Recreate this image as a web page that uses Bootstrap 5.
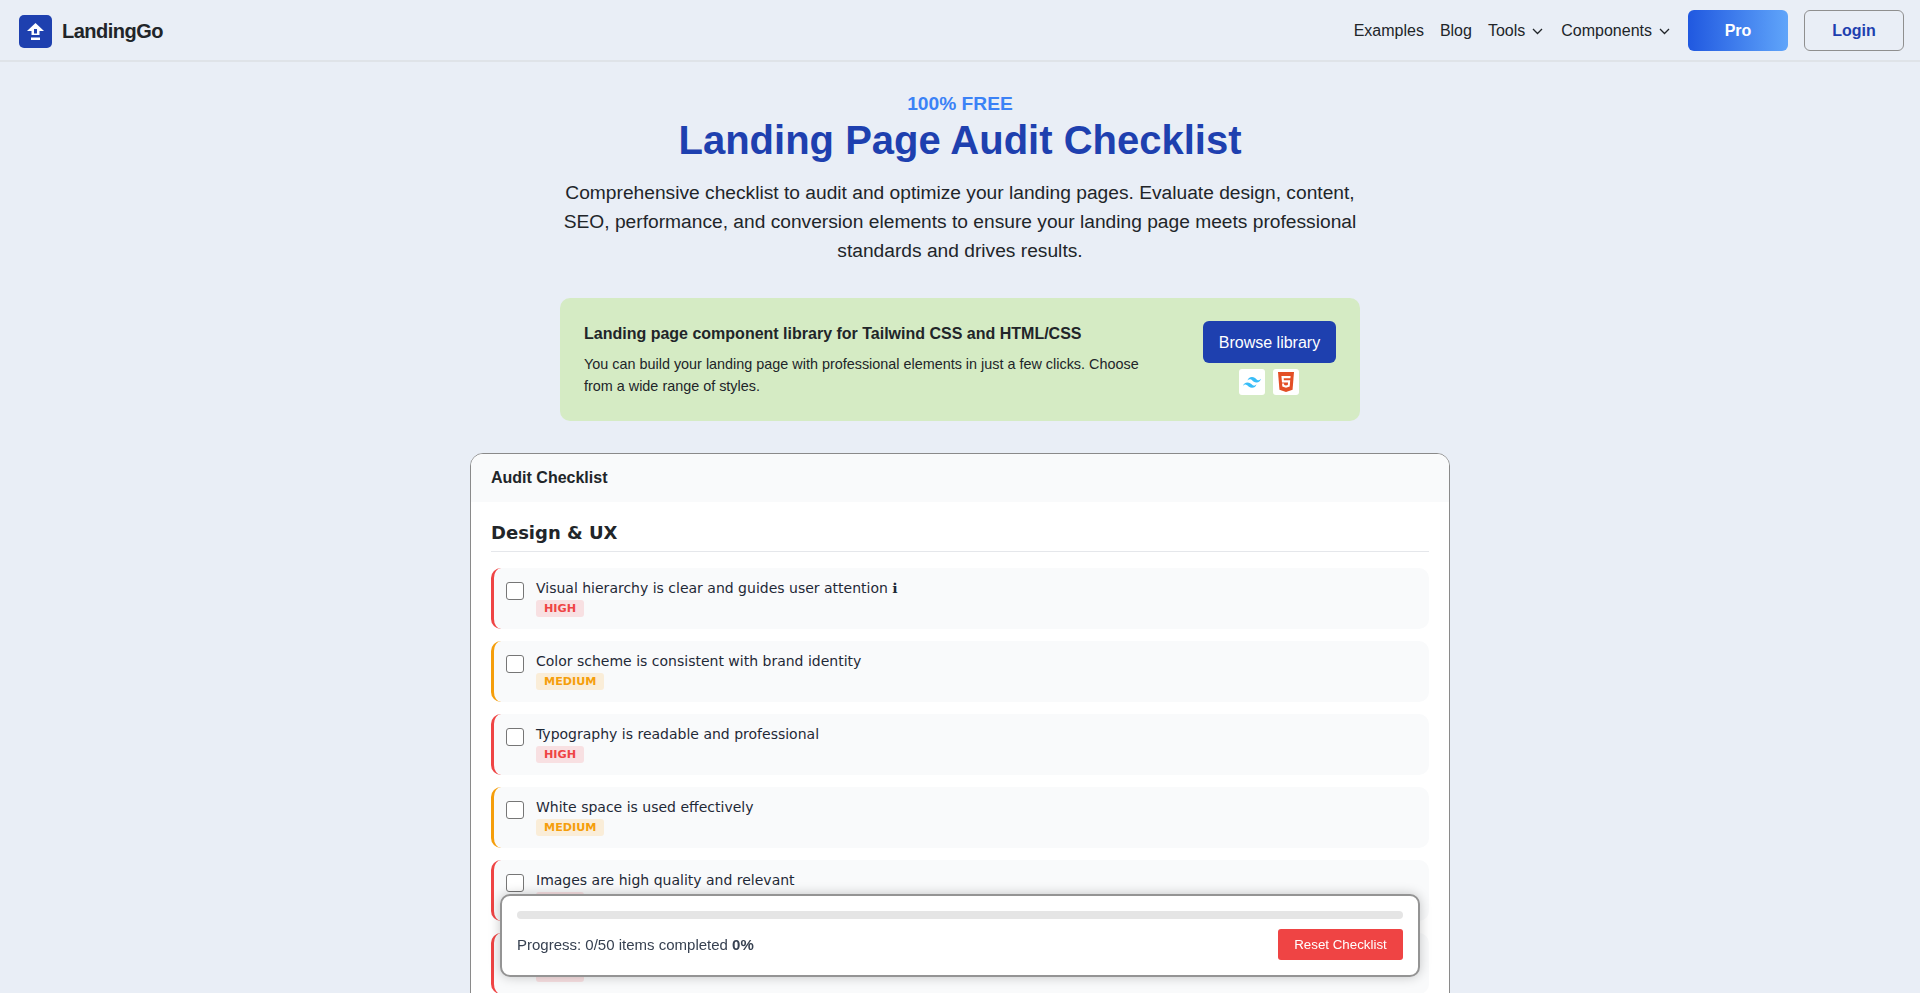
<!DOCTYPE html>
<html lang="en">
<head>
<meta charset="utf-8">
<title>Landing Page Audit Checklist</title>
<link href="https://cdn.jsdelivr.net/npm/bootstrap@5.3.0/dist/css/bootstrap.min.css" rel="stylesheet">
<style>
html,body{height:100%;overflow:hidden}
body{background:#e9eef6;font-family:"Liberation Sans",Arial,sans-serif;color:#212529}
.top-bar{height:62px;border-bottom:2px solid #dfe3e8;padding:2px 16px 0 19px}
.brand-box{width:33px;height:33px;background:#1e40af;border-radius:5px}
.brand-name{font-size:20px;font-weight:700;letter-spacing:-.5px;color:#212529;margin-left:10px}
.top-link{font-size:16px;color:#212529;text-decoration:none;white-space:nowrap;display:flex;align-items:center}
.top-links{gap:16px}
.chev{margin-left:6px;flex:none}
.pro-btn,.login-btn{width:100px;height:41px;font-size:16px;font-weight:700;border-radius:6px;padding:0;display:flex;align-items:center;justify-content:center;text-decoration:none;margin-top:-1px}
.pro-btn{background:linear-gradient(90deg,#2058e0,#60a5fa);color:#fff;border:0}
.login-btn{color:#1e40af;border:1px solid #8f8f8f;background:transparent}
.hero{padding-top:30px;width:800px}
.eyebrow{font-size:19.2px;font-weight:700;line-height:23px;color:#3b82f6}
.hero-title{font-size:40px;font-weight:700;line-height:48px;color:#1e40af;margin:1px 0 15px}
.hero-text{font-size:19.2px;line-height:28.8px;color:#212529;margin:0 0 33px}
.promo{width:800px;height:123px;background:#d5ebc4;border-radius:10px;padding:23px 24px 0}
.promo-title{font-size:16px;font-weight:700;line-height:20px;margin:0 0 10px;padding-top:3px}
.promo-text{font-size:14.4px;line-height:21.6px;margin:0;width:570px}
.browse-btn{width:133px;height:42px;background:#1e40af;color:#fff;border:0;border-radius:6px;font-size:16px;padding:2px 0 0}
.tech-tile{width:26px;height:26px;background:#fff;border-radius:3px}
.tile-row{margin-top:6px;margin-left:-1px}
.audit-box{width:980px;margin-top:32px;background:#fff;border:1px solid #8a8a8a;border-radius:13px;overflow:hidden}
.audit-head{height:48px;background:#f9fafb;padding:0 20px;font-size:16px;font-weight:700;display:flex;align-items:center}
.audit-body{padding:20px;font-family:"DejaVu Sans",sans-serif}
.group-title{font-size:18px;font-weight:700;line-height:21px;padding-bottom:8px;border-bottom:1px solid #e5e7eb;margin:0 0 16px}
.check-row{height:61px;margin-bottom:12px;background:#f9fafb;border-left:3px solid #ef4444;border-radius:10px;padding:12px;gap:12px}
.check-row.mid{border-left-color:#f59e0b}
.check-box{width:18px;height:18px;flex:none;border:1px solid #767676;border-radius:3px;background:#fff;margin-top:2px}
.check-text{font-size:14px;line-height:17px;color:#1f2937;margin-top:0}
.level{display:inline-block;font-size:11.2px;font-weight:700;line-height:17px;height:17px;padding:0 8px;border-radius:3px;margin-top:3px;vertical-align:top}
.level.hi{background:#f8e0e2;color:#ef4444}
.level.me{background:#faedd8;color:#f59e0b}
.progress-float{position:fixed;left:500px;top:894px;width:920px;height:83px;background:#fff;border:2px solid #949494;border-radius:10px;padding:15px 15px 0;box-shadow:0 0 12px rgba(0,0,0,.22)}
.track{height:8px;background:#e5e5e5;border-radius:4px;margin-bottom:10px}
.progress-label{font-size:15px;color:#374151;padding-top:1px}
.reset-btn{width:125px;height:31px;background:#ef4444;color:#fff;border:0;border-radius:3px;font-size:13.33px;padding:0}
</style>
</head>
<body>
<header class="top-bar d-flex align-items-center justify-content-between">
  <a href="#" class="d-flex align-items-center text-decoration-none">
    <span class="brand-box d-flex align-items-center justify-content-center">
      <svg width="17" height="17" viewBox="0 0 17 17" aria-hidden="true"><path d="M8.500 0 0 8h4.500v4h8V8H17z" fill="#fff"/><path d="M7 6h3v4.500H7z" fill="#1e40af"/><rect x="4" y="14.500" width="9" height="2.500" fill="#fff"/></svg>
    </span>
    <span class="brand-name">LandingGo</span>
  </a>
  <nav class="d-flex align-items-center top-links">
    <a class="top-link" href="#">Examples</a>
    <a class="top-link" href="#">Blog</a>
    <a class="top-link" href="#">Tools<svg class="chev" width="14" height="14" viewBox="0 0 14 14" aria-hidden="true"><path d="M2 5l4.500 4.500L11 5" fill="none" stroke="#212529" stroke-width="1.300"/></svg></a>
    <a class="top-link" href="#">Components<svg class="chev" width="14" height="14" viewBox="0 0 14 14" aria-hidden="true"><path d="M2 5l4.500 4.500L11 5" fill="none" stroke="#212529" stroke-width="1.300"/></svg></a>
    <a class="pro-btn" href="#">Pro</a>
    <a class="login-btn" href="#">Login</a>
  </nav>
</header>
<main class="d-flex flex-column align-items-center">
  <section class="hero text-center">
    <div class="eyebrow">100% FREE</div>
    <h1 class="hero-title">Landing Page Audit Checklist</h1>
    <p class="hero-text">Comprehensive checklist to audit and optimize your landing pages. Evaluate design, content, SEO, performance, and conversion elements to ensure your landing page meets professional standards and drives results.</p>
  </section>
  <section class="promo d-flex justify-content-between">
    <div>
      <h2 class="promo-title">Landing page component library for Tailwind CSS and HTML/CSS</h2>
      <p class="promo-text">You can build your landing page with professional elements in just a few clicks. Choose from a wide range of styles.</p>
    </div>
    <div class="d-flex flex-column align-items-center">
      <button class="browse-btn" type="button">Browse library</button>
      <div class="d-flex gap-2 tile-row">
        <span class="tech-tile d-flex align-items-center justify-content-center"><svg width="18" height="11" viewBox="0 0 18 11" aria-hidden="true"><path fill="#38bdf8" d="M9 0C6.600 0 5.100 1.200 4.500 3.600c.9-1.200 1.950-1.650 3.150-1.350.68.170 1.170.670 1.710 1.220C10.240 4.360 11.260 5.400 13.500 5.400c2.400 0 3.900-1.200 4.500-3.600-.9 1.200-1.950 1.650-3.150 1.350-.68-.170-1.170-.670-1.710-1.220C12.260 1.040 11.240 0 9 0zM4.500 5.400C2.100 5.400.6 6.600 0 9c.9-1.200 1.950-1.650 3.150-1.350.68.170 1.170.670 1.710 1.220C5.740 9.760 6.760 10.800 9 10.800c2.400 0 3.900-1.200 4.500-3.600-.9 1.200-1.950 1.650-3.150 1.350-.68-.170-1.170-.670-1.710-1.220C7.760 6.440 6.740 5.400 4.500 5.400z"/></svg></span>
        <span class="tech-tile d-flex align-items-center justify-content-center"><svg width="16" height="20" viewBox="0 0 16 18" preserveAspectRatio="none" aria-hidden="true"><path fill="#e34f26" d="M0 0h16l-1.450 16L8 18l-6.550-2z"/><path fill="#fff" d="M3.400 3.500h9.200l-.2 2.100H5.700l.15 1.900h6.350l-.5 5.600L8 14.200l-3.700-1.100-.25-2.800h2l.13 1.400 1.820.5 1.820-.5.2-2.200H4z"/></svg></span>
      </div>
    </div>
  </section>
  <section class="audit-box">
    <div class="audit-head">Audit Checklist</div>
    <div class="audit-body">
      <h3 class="group-title">Design &amp; UX</h3>
      <div class="check-row d-flex"><span class="check-box"></span><div><div class="check-text">Visual hierarchy is clear and guides user attention ℹ</div><span class="level hi">HIGH</span></div></div>
      <div class="check-row mid d-flex"><span class="check-box"></span><div><div class="check-text">Color scheme is consistent with brand identity</div><span class="level me">MEDIUM</span></div></div>
      <div class="check-row d-flex"><span class="check-box"></span><div><div class="check-text">Typography is readable and professional</div><span class="level hi">HIGH</span></div></div>
      <div class="check-row mid d-flex"><span class="check-box"></span><div><div class="check-text">White space is used effectively</div><span class="level me">MEDIUM</span></div></div>
      <div class="check-row d-flex"><span class="check-box"></span><div><div class="check-text">Images are high quality and relevant</div><span class="level hi">HIGH</span></div></div>
      <div class="check-row d-flex"><span class="check-box"></span><div><div class="check-text">&nbsp;</div><span class="level hi">HIGH</span></div></div>
    </div>
  </section>
</main>
<aside class="progress-float">
  <div class="track"></div>
  <div class="d-flex align-items-center justify-content-between">
    <span class="progress-label">Progress: 0/50 items completed <strong>0%</strong></span>
    <button class="reset-btn" type="button">Reset Checklist</button>
  </div>
</aside>
<script src="https://cdn.jsdelivr.net/npm/bootstrap@5.3.0/dist/js/bootstrap.bundle.min.js"></script>
</body>
</html>
